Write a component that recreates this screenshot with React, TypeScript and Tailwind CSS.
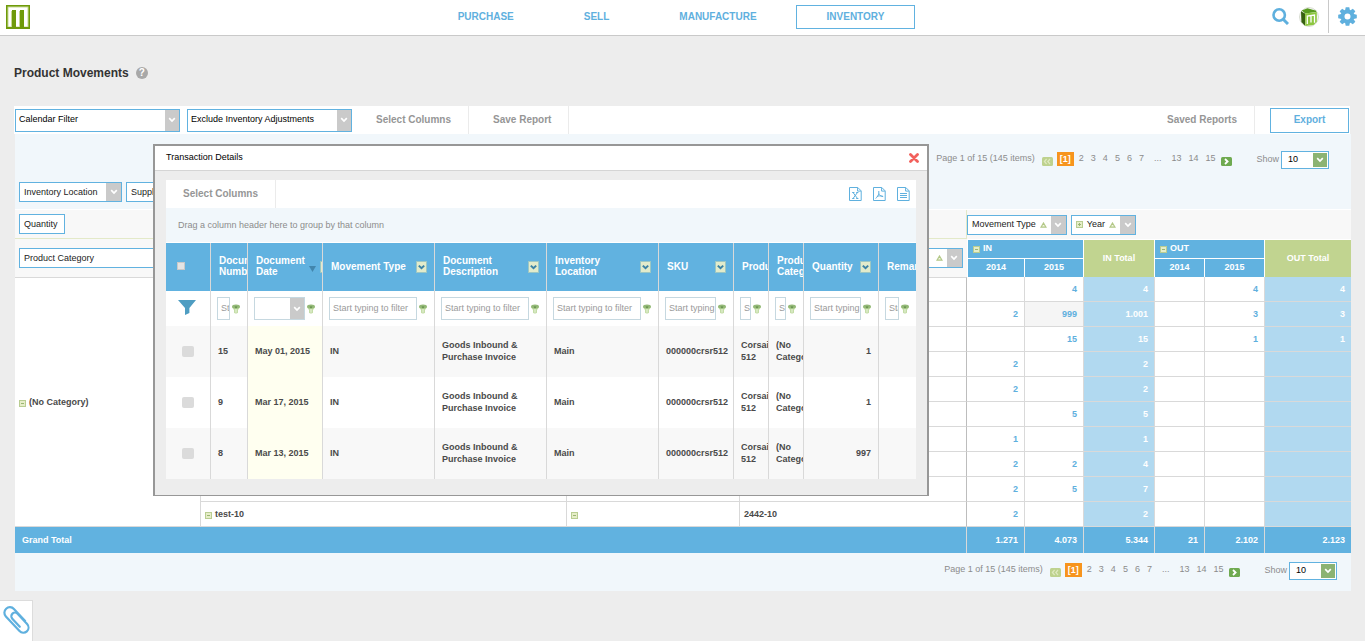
import type { ReactNode } from 'react';
import clsx from 'clsx';

type NavItem = { label: string; active?: boolean };

const navItems: NavItem[] = [
  { label: 'PURCHASE' },
  { label: 'SELL' },
  { label: 'MANUFACTURE' },
  { label: 'INVENTORY', active: true },
];

// in 2014, in 2015, in total, out 2014, out 2015, out total
const pivotRows: string[][] = [
  ['', '4', '4', '', '4', '4'],
  ['2', '999', '1.001', '', '3', '3'],
  ['', '15', '15', '', '1', '1'],
  ['2', '', '2', '', '', ''],
  ['2', '', '2', '', '', ''],
  ['', '5', '5', '', '', ''],
  ['1', '', '1', '', '', ''],
  ['2', '2', '4', '', '', ''],
  ['2', '5', '7', '', '', ''],
  ['2', '', '2', '', '', ''],
];

const grandTotals = ['1.271', '4.073', '5.344', '21', '2.102', '2.123'];

interface Column {
  lines: string[];
  width: string;
  sorted?: boolean;
  select?: boolean;
}

const columns: Column[] = [
  { lines: ['Document', 'Number'], width: 'w-[37px]' },
  { lines: ['Document', 'Date'], width: 'w-[75px]', sorted: true, select: true },
  { lines: ['Movement Type'], width: 'w-[112px]' },
  { lines: ['Document', 'Description'], width: 'w-[112px]' },
  { lines: ['Inventory', 'Location'], width: 'w-[112px]' },
  { lines: ['SKU'], width: 'w-[75px]' },
  { lines: ['Product'], width: 'w-[35px]' },
  { lines: ['Product', 'Category'], width: 'w-[35px]' },
  { lines: ['Quantity'], width: 'w-[75px]' },
  { lines: ['Remarks'], width: 'w-[37px]' },
];

const transactions = [
  { id: '15', date: 'May 01, 2015', quantity: '1' },
  { id: '9', date: 'Mar 17, 2015', quantity: '1' },
  { id: '8', date: 'Mar 13, 2015', quantity: '997' },
];

function Chevron({ className = 'text-white' }: { className?: string }) {
  return (
    <svg width="8" height="6" viewBox="0 0 8 6" className={className} aria-hidden="true">
      <path d="M1.2 1.2 4 4l2.8-2.8" fill="none" stroke="currentColor" strokeWidth="1.7" />
    </svg>
  );
}

function SortTriangle() {
  return (
    <svg width="7" height="6" viewBox="0 0 7 6" aria-hidden="true">
      <path d="M3.5 1 6 5.2H1z" fill="#f4f7e6" stroke="#b3c888" strokeWidth="1.2" />
    </svg>
  );
}

function Toggle({ plus = false }: { plus?: boolean }) {
  return (
    <svg width="7" height="7" viewBox="0 0 7 7" className="shrink-0" aria-hidden="true">
      <rect x="0.5" y="0.5" width="6" height="6" fill="#e6edc8" stroke="#b9cd92" />
      <path d={plus ? 'M2 3.5h3M3.5 2v3' : 'M2 3.5h3'} stroke="#9ab673" />
    </svg>
  );
}

function FilterPin() {
  return (
    <svg width="8" height="10" viewBox="0 0 8 10" className="shrink-0" aria-hidden="true">
      <path d="M0 2.6h8c0 1.6-1 2.2-2 3.4v2.8c-.6 1-3.4 1-4 0V6C1 4.8 0 4.2 0 2.6z" fill="#c3dca6" />
      <path d="M3.4 5h1.2v3.6H3.4z" fill="#e3f0d3" />
      <ellipse cx="4" cy="2.4" rx="4" ry="2" fill="#94b978" />
      <path d="M2.6 2.6h2.8L4 4.4z" fill="#5d8a44" />
    </svg>
  );
}

function HeaderFilter() {
  return (
    <svg width="11" height="12" viewBox="0 0 11 12" className="shrink-0" aria-hidden="true">
      <rect x="0.5" y="0.5" width="10" height="11" fill="#e2ebcb" stroke="#9cc7c4" />
      <path d="m2.8 4.6 2.7 2.6 2.7-2.6" fill="none" stroke="#3b82a6" strokeWidth="2" />
    </svg>
  );
}

interface DropDownProps {
  label: string;
  options: string[];
  className?: string;
  border?: string;
}

function DropDown({ label, options, className, border = 'border-[#61b2e0]' }: DropDownProps) {
  return (
    <div className={clsx('relative h-[23px] shrink-0', className)}>
      <select
        aria-label={label}
        className={clsx('block h-full w-full appearance-none border bg-white pr-4 pl-[3px] text-[9px] text-black', border)}
      >
        {options.map((option) => (
          <option key={option}>{option}</option>
        ))}
      </select>
      <span className="pointer-events-none absolute inset-y-px right-px flex w-[14px] items-center justify-center bg-[#cacaca]">
        <Chevron />
      </span>
    </div>
  );
}

interface FieldChipProps {
  children?: ReactNode;
  label?: string;
  plus?: boolean;
  sorted?: boolean;
  menu?: boolean;
  className?: string;
}

function FieldChip({ children, label, plus, sorted, menu = true, className }: FieldChipProps) {
  return (
    <button
      aria-label={label}
      className={clsx(
        'flex h-5 items-center border border-[#61b2e0] bg-white pl-1 text-[9px] font-normal whitespace-nowrap text-[#222]',
        className
      )}
    >
      {plus && <span className="mr-1"><Toggle plus /></span>}
      <span className={clsx('pt-px', !menu && 'pr-[6px]')}>{children}</span>
      {menu && (
        <span className="ml-auto flex h-full items-center gap-1 pl-1">
          {sorted && <SortTriangle />}
          <span className="flex h-full w-[15px] items-center justify-center bg-[#cacaca]">
            <Chevron />
          </span>
        </span>
      )}
    </button>
  );
}

function PageArrow({ next = false }: { next?: boolean }) {
  return (
    <button aria-label={next ? 'Next page' : 'Previous page'} disabled={!next}>
      <svg width="11" height="9" viewBox="0 0 11 9" className="mt-1 block">
        <rect width="11" height="9" rx="1.5" fill={next ? '#6faa50' : '#bed28e'} />
        {next ? (
          <path d="m4 2 2.6 2.5L4 7" fill="none" stroke="#fff" strokeWidth="1.8" />
        ) : (
          <path d="M4.6 2 2.4 4.5 4.6 7M8 2 5.8 4.5 8 7" fill="none" stroke="#dfe9c0" strokeWidth="1.2" />
        )}
      </svg>
    </button>
  );
}

function Pager() {
  return (
    <nav className="flex items-center text-[9px] text-[#8c8c8c]">
      <div className="flex items-center pb-[2px]">
        <span>Page 1 of 15 (145 items)</span>
        <div className="mr-1 ml-[7px] flex items-center gap-1">
          <PageArrow />
          <span className="bg-[#f7941d] px-[3px] leading-[14px] font-bold text-white">[1]</span>
        </div>
        <div className="mr-[6px] ml-px flex items-center gap-[7px]">
          {['2', '3', '4', '5', '6', '7'].map((page) => (
            <a key={page} href="#">{page}</a>
          ))}
          <span className="mx-[3px]">...</span>
          {['13', '14', '15'].map((page) => (
            <a key={page} href="#">{page}</a>
          ))}
        </div>
        <PageArrow next />
      </div>
      <label className="ml-6 flex items-center gap-[2px]">
        Show
        <span className="relative block h-[18px] w-12">
          <select className="block h-full w-full appearance-none border border-[#61b2e0] bg-white pl-[6px] text-[9px] text-black">
            <option>10</option>
          </select>
          <span className="pointer-events-none absolute inset-y-[2px] right-[2px] flex w-[14px] items-center justify-center bg-[#8bb373]">
            <Chevron />
          </span>
        </span>
      </label>
    </nav>
  );
}

function Header() {
  return (
    <header className="flex h-9 items-center border-b border-[#c9c9c9] bg-white">
      <a href="#" aria-label="Home" className="w-[72px] pb-[2px] pl-[6px]">
        <svg width="24" height="24" viewBox="0 0 24 24" className="block">
          <rect width="24" height="24" fill="#6f9a0a" />
          <rect x="1.5" y="1.5" width="21" height="20.5" fill="#c8da94" />
          <rect x="2.5" y="2.5" width="19" height="19" fill="#fff" />
          <path d="M6 5h4v17H6zM14 5h4v17h-4z" fill="#6f9a0a" />
          <path d="M5.5 6v16M13.5 6v16" stroke="#c8da94" />
        </svg>
      </a>
      <nav className="flex flex-1 justify-center gap-2 pb-[2px]">
        {navItems.map((item) => (
          <a
            key={item.label}
            href="#"
            className={clsx(
              'border px-[30px] text-[10px] leading-[22px] font-bold text-[#5fb0de]',
              item.active ? 'border-[#61b2e0]' : 'border-transparent'
            )}
          >
            {item.label}
          </a>
        ))}
      </nav>
      <div className="flex h-full w-[95px] items-center pb-[2px] pl-[2px]">
        <button aria-label="Search">
          <svg width="17" height="17" viewBox="0 0 17 17" fill="none" stroke="#5fb0de" className="block">
            <circle cx="7.2" cy="7" r="5.7" strokeWidth="2.6" />
            <path d="m11.2 11.2 4.8 4.8" strokeWidth="3" />
          </svg>
        </button>
        <button aria-label="Account" className="ml-[10px]">
          <svg width="20" height="20" viewBox="0 0 20 20" className="block">
            <circle cx="10" cy="10" r="9.4" fill="#fff" stroke="#d3d8cc" />
            <path d="M2.6 3.4 8.5 1.2l8.8 2.6-.3 1.3L6.3 6.6z" fill="#579a1e" />
            <path d="M2 4.2 6 6.6v12.1L2.4 15z" fill="#36600f" />
            <path d="M6 6.6 17.8 5v9.8l-3.3 3.2-8.2.9z" fill="#8cc63f" />
            <path d="M8.3 17V9l7.2-.9v7.6M12 15.6V8.8" fill="none" stroke="#fff" strokeWidth="1.3" />
          </svg>
        </button>
        <span className="ml-[9px] h-[33px] w-px self-start bg-[#c9c9c9]" />
        <button aria-label="Settings" className="ml-[9px]">
          <svg width="19" height="19" viewBox="-9.5 -9.5 19 19" className="block">
            <circle r="5" fill="none" stroke="#5fb0de" strokeWidth="4" />
            {[0, 45, 90, 135].map((angle) => (
              <g key={angle} transform={`rotate(${angle})`} fill="#5fb0de">
                <path d="M-2.4-6.2-1.8-9.3h3.6l.6 3.1zM-2.4 6.2l.6 3.1h3.6l.6-3.1z" />
              </g>
            ))}
          </svg>
        </button>
      </div>
    </header>
  );
}

function Toolbar() {
  return (
    <div className="mr-px flex h-7 items-center bg-white pl-px">
      <DropDown label="Calendar filter" options={['Calendar Filter']} className="w-[165px]" />
      <DropDown
        label="Inventory adjustments"
        options={['Exclude Inventory Adjustments']}
        className="ml-[7px] w-[165px]"
      />
      <button className="h-full border-r border-[#ebebeb] pr-[17px] pb-[2px] pl-6 text-[10px] font-bold text-[#969696]">
        Select Columns
      </button>
      <button className="h-full border-r border-[#ebebeb] pr-[17px] pb-[2px] pl-6 text-[10px] font-bold text-[#969696]">
        Save Report
      </button>
      <button className="ml-auto h-full border-r border-[#ebebeb] pr-[17px] pb-[2px] text-[10px] font-bold text-[#969696]">
        Saved Reports
      </button>
      <button className="mr-px ml-[15px] h-[25px] w-[79px] border border-[#61b2e0] pb-[2px] text-[10px] font-bold text-[#5fb0de]">
        Export
      </button>
    </div>
  );
}

function PivotTable() {
  const blueHead = 'border-r border-white bg-[#61b2e0] text-white';
  const greenHead = 'border-t border-r border-white bg-[#c1d490] text-white';

  return (
    <table className="w-full table-fixed border-separate border-spacing-0 bg-white text-[9px] font-bold text-[#4a4a4a]">
      <colgroup>
        <col className="w-[186px]" />
        <col />
        <col className="w-[173px]" />
        <col className="w-[227px]" />
        <col className="w-[58px]" />
        <col className="w-[59px]" />
        <col className="w-[71px]" />
        <col className="w-[50px]" />
        <col className="w-[60px]" />
        <col className="w-[86px]" />
      </colgroup>
      <thead>
        <tr className="h-[29px] bg-[#f8f8f8]">
          <td colSpan={4} className="border-r border-b border-[#e3e9c8] pl-1">
            <FieldChip menu={false}>Quantity</FieldChip>
          </td>
          <td colSpan={6}>
            <div className="flex gap-1">
              <FieldChip sorted>Movement Type</FieldChip>
              <FieldChip plus sorted>Year</FieldChip>
            </div>
          </td>
        </tr>
        <tr className="h-5">
          <td rowSpan={2} className="bg-[#f8f8f8] px-1">
            <FieldChip sorted className="w-full">Product Category</FieldChip>
          </td>
          <td rowSpan={2} className="bg-[#f8f8f8] px-1">
            <FieldChip sorted label="Product field" className="w-full" />
          </td>
          <td rowSpan={2} className="bg-[#f8f8f8] px-1">
            <FieldChip sorted label="Variant field" className="w-full" />
          </td>
          <td rowSpan={2} className="bg-[#f8f8f8] px-1">
            <FieldChip sorted label="SKU field" className="w-full" />
          </td>
          <th colSpan={2} className={clsx(blueHead, 'border-y border-l pl-[5px]')}>
            <span className="flex items-center gap-[3px]"><Toggle />IN</span>
          </th>
          <th rowSpan={2} className={greenHead}>IN Total</th>
          <th colSpan={2} className={clsx(blueHead, 'border-y pl-[5px]')}>
            <span className="flex items-center gap-[3px]"><Toggle />OUT</span>
          </th>
          <th rowSpan={2} className="border-t border-white bg-[#c1d490] text-white">OUT Total</th>
        </tr>
        <tr className="h-[18px]">
          <th className={clsx(blueHead, 'border-l')}>2014</th>
          <th className={blueHead}>2015</th>
          <th className={blueHead}>2014</th>
          <th className={blueHead}>2015</th>
        </tr>
      </thead>
      <tbody>
        {pivotRows.map((row, rowIndex) => {
          const first = rowIndex === 0;
          const last = rowIndex === pivotRows.length - 1;
          const line = clsx('border-r border-b border-[#d9d9d9] pt-[2px] pl-1', first && 'border-t');
          return (
            <tr key={rowIndex} className="h-[25px]">
              {first && (
                <td rowSpan={pivotRows.length} className="border border-l-0 border-[#d9d9d9] pt-[2px] pl-1">
                  <span className="flex items-center gap-[3px]"><Toggle />(No Category)</span>
                </td>
              )}
              <td className={line}>
                {last && <span className="flex items-center gap-[3px]"><Toggle />test-10</span>}
              </td>
              <td className={line}>{last && <Toggle />}</td>
              <td className={clsx(line, 'border-r-[#bdbdbd]')}>{last && '2442-10'}</td>
              {row.map((value, i) => (
                <td
                  key={i}
                  className={clsx(
                    'border-b border-[#d9d9d9] pt-[2px] pr-[6px] text-right',
                    i < 5 && 'border-r',
                    i === 2 || i === 5 ? 'bg-[#b1d9f0] text-white' : 'text-[#5fb0de]',
                    value === '999' && 'bg-[#f5f5f5]'
                  )}
                >
                  {value}
                </td>
              ))}
            </tr>
          );
        })}
      </tbody>
      <tfoot>
        <tr className="h-[26px] bg-[#61b2e0] text-white">
          <th colSpan={4} className="border-r border-[#d9d9d9] pt-px pl-[7px] text-left">Grand Total</th>
          {grandTotals.map((value, i) => (
            <td key={i} className={clsx('border-[#d9d9d9] pt-px pr-[6px] text-right', i < 5 && 'border-r')}>
              {value}
            </td>
          ))}
        </tr>
      </tfoot>
    </table>
  );
}

function ExportIcon({ label, children }: { label: string; children: ReactNode }) {
  return (
    <button aria-label={label}>
      <svg width="13" height="14" viewBox="0 0 13 14" fill="none" stroke="#5fb0de" className="block">
        <path d="M.5.5h8.3l3.4 3.4v9.6H.5z" />
        <path d="M8.6.8v3.3h3.3" />
        {children}
      </svg>
    </button>
  );
}

function TransactionTable() {
  const cell = 'overflow-hidden border-r border-[#d9d9d9] pb-[2px] pl-[7px] whitespace-nowrap last:border-r-0';

  return (
    <table className="w-full table-fixed border-separate border-spacing-0 border-t border-white bg-white text-[9px] leading-3 font-bold text-[#4a4a4a]">
      <colgroup>
        <col className="w-[45px]" />
        {columns.map((column, i) => (
          <col key={i} className={column.width} />
        ))}
      </colgroup>
      <thead>
        <tr className="h-12 bg-[#61b2e0] text-left text-[10px] leading-[11px] text-white">
          <th className="border-r border-[#d9d9d9] pb-[2px] pl-[11px]">
            <input
              type="checkbox"
              aria-label="Select all"
              className="block size-2 appearance-none border border-[#c9c9c9] bg-[#e4e4e4]"
            />
          </th>
          {columns.map((column, i) => (
            <th key={i} className="border-r border-[#d9d9d9] pl-2 whitespace-nowrap last:border-r-0">
              <div className="flex items-center overflow-hidden">
                <span className="pb-[2px]">
                  {column.lines.map((text) => (
                    <span key={text} className="block">{text}</span>
                  ))}
                </span>
                {column.sorted && (
                  <svg width="7" height="6" viewBox="0 0 7 6" className="mt-1 ml-1 shrink-0" aria-hidden="true">
                    <path d="M0 0h7L3.5 6z" fill="#4286ad" />
                  </svg>
                )}
                <span className="ml-auto pr-[7px] pl-1"><HeaderFilter /></span>
              </div>
            </th>
          ))}
        </tr>
        <tr className="h-[35px]">
          <td className="border-r border-[#d9d9d9] pb-[2px] pl-3">
            <button aria-label="Filter" className="block">
              <svg width="18" height="15" viewBox="0 0 18 15" className="block">
                <path d="M0 0h18l-6.6 8v5L7 15V8z" fill="#4e9dc2" />
              </svg>
            </button>
          </td>
          {columns.map((column, i) => (
            <td key={i} className="border-r border-[#d9d9d9] pr-[7px] pl-[6px] last:border-r-0">
              <div className="flex items-center gap-[2px]">
                {column.select ? (
                  <DropDown label={column.lines.join(' ')} options={['']} className="flex-1" border="border-[#c6d8e0]" />
                ) : (
                  <input
                    type="text"
                    aria-label={column.lines.join(' ')}
                    placeholder="Start typing to filter"
                    className="h-[23px] w-0 min-w-0 flex-1 border border-[#c6d8e0] pb-px pl-[3px] font-normal placeholder:text-[#9a9a9a]"
                  />
                )}
                <FilterPin />
              </div>
            </td>
          ))}
        </tr>
      </thead>
      <tbody>
        {transactions.map((row) => (
          <tr key={row.id} className="h-[51px] odd:bg-[#f8f8f8]">
            <td className="border-r border-[#d9d9d9] pl-4">
              <input
                type="checkbox"
                aria-label={`Select ${row.id}`}
                className="block h-[11px] w-3 appearance-none rounded-xs bg-[#dbdbdb]"
              />
            </td>
            <td className={cell}>{row.id}</td>
            <td className={clsx(cell, 'bg-[#fffff0]')}>{row.date}</td>
            <td className={cell}>IN</td>
            <td className={cell}>Goods Inbound &amp;<br />Purchase Invoice</td>
            <td className={cell}>Main</td>
            <td className={cell}>000000crsr512</td>
            <td className={cell}><div className="overflow-hidden">Corsair<br />512</div></td>
            <td className={cell}><div className="overflow-hidden">(No<br />Category)</div></td>
            <td className={clsx(cell, 'pr-[7px] text-right')}>{row.quantity}</td>
            <td className={cell} />
          </tr>
        ))}
      </tbody>
    </table>
  );
}

function TransactionDialog() {
  return (
    <div
      role="dialog"
      aria-labelledby="dialog-title"
      className="absolute top-[144px] left-[153px] w-[776px] border-2 border-b border-[#979797] bg-[#ededed]"
    >
      <div className="flex h-[25px] items-center justify-between border-b border-[#d5d5d5] bg-white pr-2 pl-[11px]">
        <h2 id="dialog-title" className="text-[9px] text-black">Transaction Details</h2>
        <button aria-label="Close">
          <svg width="10" height="10" viewBox="0 0 10 10" className="block">
            <path d="m1.5 1.5 7 7m0-7-7 7" stroke="#f2605c" strokeWidth="2.8" strokeLinecap="round" />
          </svg>
        </button>
      </div>
      <div className="px-[11px] pt-[9px] pb-4">
        <div className="flex h-7 items-center bg-white pr-[6px]">
          <button className="h-full border-r border-[#ebebeb] px-[17px] pb-[2px] text-[10px] font-bold text-[#969696]">
            Select Columns
          </button>
          <div className="ml-auto flex gap-[11px]">
            <ExportIcon label="Export to Excel">
              <path d="m4 5.5 4.5 6M8.5 5.5l-4.5 6M3.2 5.5h2.2M7.2 5.5h2.2M3.2 11.5h2.2M7.2 11.5h2.2" />
            </ExportIcon>
            <ExportIcon label="Export to PDF">
              <path d="M5.8 4v2.4c-.4 2-1.6 4-3.2 5M5.8 6.4c.6 1.8 2.2 3 4.4 3.2M3.8 9.6c2-.9 3.6-1 6.2-.2" />
            </ExportIcon>
            <ExportIcon label="Export to text">
              <path d="M3 6.5h7M3 8.5h7M3 10.5h7" />
            </ExportIcon>
          </div>
        </div>
        <p className="bg-[#f1f7fb] pl-3 text-[9px] leading-[34px] text-[#8c8c8c]">
          Drag a column header here to group by that column
        </p>
        <TransactionTable />
      </div>
    </div>
  );
}

export default function App() {
  return (
    <div className="relative min-h-screen bg-[#ededed] font-['Liberation_Sans',Arial,sans-serif]">
      <Header />
      <main className="px-[14px] pt-[29px]">
        <div className="mb-[25px] flex h-4 items-center gap-[7px]">
          <h1 className="text-[12px] font-bold text-[#333]">Product Movements</h1>
          <span className="size-3 rounded-full bg-[#a8a8a8] text-center text-[10px] leading-3 font-bold text-white">?</span>
        </div>
        <Toolbar />
        <div className="ml-px bg-[#f1f7fb]">
          <div className="flex justify-end pt-[17px] pr-[22px]">
            <Pager />
          </div>
          <div className="flex gap-1 border-b border-white pt-[13px] pb-[7px] pl-1">
            <FieldChip className="w-[103px]">Inventory Location</FieldChip>
            <FieldChip>Supplier</FieldChip>
          </div>
          <PivotTable />
          <div className="flex h-[38px] items-center justify-end pr-[14px] pb-[2px]">
            <Pager />
          </div>
        </div>
      </main>
      <TransactionDialog />
      <button
        aria-label="Attachments"
        className="fixed bottom-0 left-0 flex h-[41px] w-[33px] items-center justify-center border-t border-r border-[#dcdcdc] bg-white pb-[2px]"
      >
        <svg width="28" height="30" viewBox="-14 -15 28 30">
          <path
            transform="rotate(-43)"
            d="M6 7V-9.5a5.5 5.5 0 0 0-11 0V10.5a5.2 5.2 0 0 0 10.4 0V-3.5a3.6 3.6 0 0 0-7.2 0V7.5"
            fill="none"
            stroke="#5fb0de"
            strokeWidth="2.2"
            strokeLinecap="round"
          />
        </svg>
      </button>
    </div>
  );
}
